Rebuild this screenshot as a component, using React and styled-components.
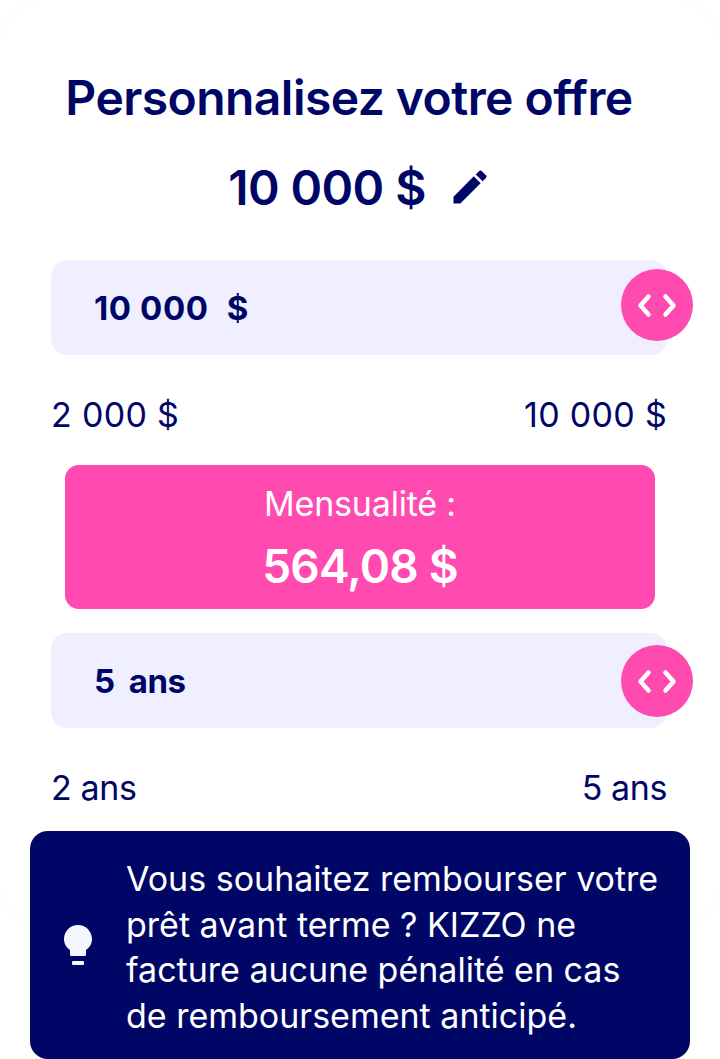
import styled, { createGlobalStyle } from 'styled-components';

const navy = '#000666';
const pink = '#ff4ab0';

const GlobalStyle = createGlobalStyle`
  html, body {
    margin: 0;
    padding: 0;
    background: #fff;
  }
  body {
    font-family: Inter, "Noto Sans", sans-serif;
    color: ${navy};
    overflow: hidden;
  }
`;

const Page = styled.div`
  width: 720px;
  height: 1059px;
  position: relative;
  overflow: hidden;
  box-sizing: border-box;
  padding: 67px 30px 0;
`;

const CardOutline = styled.div`
  position: absolute;
  left: -1px;
  right: -1px;
  top: -1px;
  height: 930px;
  border: 1px solid #fcfcff;
  border-radius: 48px;
  box-sizing: border-box;
`;

const Content = styled.div`
  position: relative;
  display: flex;
  flex-direction: column;
`;

const Title = styled.h1`
  margin: 0 22px 0 0;
  text-align: center;
  font-size: 48px;
  line-height: 62px;
  font-weight: 600;
  letter-spacing: -0.55px;
  white-space: nowrap;
`;

const AmountRow = styled.div`
  margin-top: 33px;
  display: flex;
  justify-content: center;
  align-items: center;
  gap: 22px;
  height: 50px;
`;

const Amount = styled.span`
  font-size: 48px;
  font-weight: 600;
  letter-spacing: -0.6px;
`;

const Slider = styled.div`
  position: relative;
  margin: ${(p) => p.$top}px 23px 0 21px;
  height: 95px;
  background: #f0efff;
  border-radius: 16px;
  display: flex;
  align-items: center;
  gap: ${(p) => p.$gap}px;
  padding-left: 43px;
  font-size: 33px;
  font-weight: 700;
  letter-spacing: ${(p) => p.$spacing}px;
`;

const Knob = styled.div`
  position: absolute;
  right: -26px;
  top: ${(p) => p.$top}px;
  width: 72px;
  height: 72px;
  border-radius: 50%;
  background: ${pink};
  display: flex;
  align-items: center;
  justify-content: center;
`;

const Range = styled.div`
  margin: 0 23px 0 21px;
  height: 118px;
  padding-top: 40px;
  box-sizing: border-box;
  display: flex;
  justify-content: space-between;
  font-size: 34px;
  line-height: 40px;
  letter-spacing: ${(p) => p.$spacing}px;
`;

const Payment = styled.div`
  margin: -8px 35px 0;
  height: 144px;
  border-radius: 14px;
  background: ${pink};
  color: #fff;
  display: flex;
  flex-direction: column;
  align-items: center;
`;

const PaymentLabel = styled.div`
  margin-top: 19px;
  font-size: 34px;
  line-height: 40px;
  letter-spacing: -0.2px;
`;

const PaymentValue = styled.div`
  margin-top: 14px;
  font-size: 46px;
  line-height: 56px;
  font-weight: 600;
  letter-spacing: -0.8px;
`;

const Tip = styled.div`
  margin-top: -15px;
  height: 228px;
  box-sizing: border-box;
  border-radius: 18px;
  background: ${navy};
  color: #fff;
  display: flex;
  align-items: center;
  padding: 4px 28px 0 34px;
  gap: 34px;
`;

const TipText = styled.p`
  margin: 0;
  font-size: 34px;
  line-height: 45.5px;
`;

const TipIcon = styled.svg`
  flex: none;
  margin-top: -4px;
`;

const PencilIcon = () => (
  <svg width="44" height="44" viewBox="0 0 24 24" fill={navy}>
    <path d="M3 17.25V21h3.75L17.81 9.94l-3.75-3.75L3 17.25zM20.71 7.04a1 1 0 0 0 0-1.41l-2.34-2.34a1 1 0 0 0-1.41 0l-1.83 1.83 3.75 3.75 1.83-1.83z" />
  </svg>
);

const ArrowsIcon = () => (
  <svg width="44" height="30" viewBox="0 0 44 30" fill="none" stroke="#fff" strokeWidth="4.5" strokeLinecap="round" strokeLinejoin="round">
    <path d="M13.500 6.500 5.500 15.500 13.500 24.500" />
    <path d="M30.500 6.500 38.500 15.500 30.500 24.500" />
  </svg>
);

const BulbIcon = () => (
  <TipIcon width="28" height="40" viewBox="0 0 28 40" fill="#f5f7ff">
    <path d="M14 0C6.300 0 0 6.200 0 14c0 4.900 2.500 8.600 6 11v4.500c0 1 .8 1.500 1.500 1.500h13c.7 0 1.500-.5 1.500-1.500V25c3.500-2.400 6-6.100 6-11C28 6.200 21.700 0 14 0z" />
    <rect x="8" y="36" width="12" height="4" rx="1" />
  </TipIcon>
);

const App = () => (
  <Page>
    <GlobalStyle />
    <CardOutline />
    <Content>
      <Title>Personnalisez votre offre</Title>
      <AmountRow>
        <Amount>10 000 $</Amount>
        <PencilIcon />
      </AmountRow>
      <Slider $top={48} $gap={18} $spacing={0.6}>
        <span>10 000</span>
        <span>$</span>
        <Knob $top={9}><ArrowsIcon /></Knob>
      </Slider>
      <Range $spacing={0.3}>
        <span>2 000 $</span>
        <span>10 000 $</span>
      </Range>
      <Payment>
        <PaymentLabel>Mensualité :</PaymentLabel>
        <PaymentValue>564,08 $</PaymentValue>
      </Payment>
      <Slider $top={24} $gap={14} $spacing={-0.4}>
        <span>5</span>
        <span>ans</span>
        <Knob $top={12}><ArrowsIcon /></Knob>
      </Slider>
      <Range $spacing={-0.4}>
        <span>2 ans</span>
        <span>5 ans</span>
      </Range>
      <Tip>
        <BulbIcon />
        <TipText>Vous souhaitez rembourser votre prêt avant terme ? KIZZO ne facture aucune pénalité en cas de remboursement anticipé.</TipText>
      </Tip>
    </Content>
  </Page>
);

export default App;
